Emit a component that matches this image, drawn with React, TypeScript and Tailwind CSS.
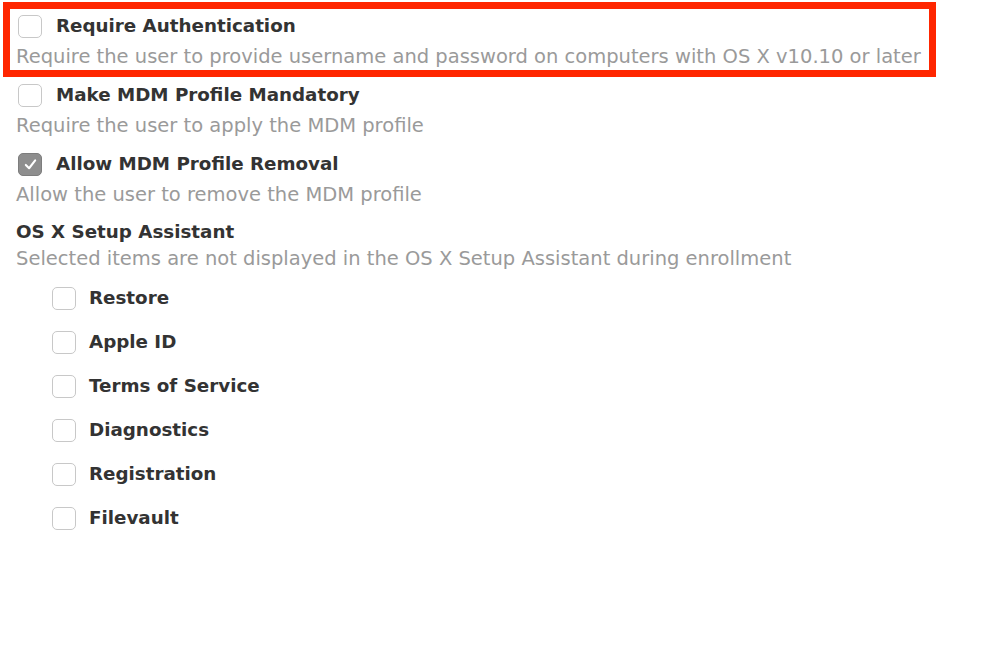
import React from "react";

function Box({ checked = false }: { checked?: boolean }) {
  if (checked) {
    return (
      <span className="flex h-[23px] w-[24px] shrink-0 items-center justify-center rounded-[5px] border border-[#7d7d7d] bg-[#8e8e8e]">
        <svg viewBox="0 0 16 16" className="h-[15px] w-[15px]" fill="none" stroke="white" strokeWidth="2.2" strokeLinecap="round" strokeLinejoin="round">
          <path d="M3 8.5 L6.5 12 L13 3.5" />
        </svg>
      </span>
    );
  }
  return <span className="block h-[23px] w-[24px] shrink-0 rounded-[5px] border border-[#c8c8c8] bg-white" />;
}

function Option({ title, desc, checked }: { title: string; desc: string; checked?: boolean }) {
  return (
    <div>
      <div className="flex h-[30px] items-center gap-[14px] pt-[2px] pl-[18px]">
        <Box checked={checked} />
        <span className="text-[18.3px] font-bold text-[#333]">{title}</span>
      </div>
      <div className="h-[30px] pt-[2px] pl-[16px] text-[19.5px] leading-[30px] whitespace-nowrap text-[#9a9a9a]">{desc}</div>
    </div>
  );
}

const items = ["Restore", "Apple ID", "Terms of Service", "Diagnostics", "Registration", "Filevault"];

export default function App() {
  return (
    <div className="h-[655px] w-[998px] bg-white" style={{ fontFamily: '"DejaVu Sans", Verdana, sans-serif' }}>
      <div className="ml-[3px] pt-[2px]">
        <div className="w-[933px] border-[7px] border-[#ff2600] pt-[1px]">
          <div className="-ml-[10px]">
            <Option title="Require Authentication" desc="Require the user to provide username and password on computers with OS X v10.10 or later" />
          </div>
        </div>
      </div>
      <div className="mt-[2px] flex flex-col gap-[9px]">
        <Option title="Make MDM Profile Mandatory" desc="Require the user to apply the MDM profile" />
        <Option title="Allow MDM Profile Removal" desc="Allow the user to remove the MDM profile" checked />
      </div>
      <div className="mt-[10px] pl-[16px]">
        <div className="text-[18.3px] font-bold leading-[28px] text-[#333]">OS X Setup Assistant</div>
        <div className="text-[19.5px] leading-[26px] text-[#9a9a9a]">Selected items are not displayed in the OS X Setup Assistant during enrollment</div>
      </div>
      <div className="mt-[13px] flex flex-col gap-[18px] pl-[52px]">
        {items.map((t) => (
          <div key={t} className="flex h-[26px] items-center gap-[13px]">
            <Box />
            <span className="text-[18.3px] font-bold leading-[26px] text-[#333]">{t}</span>
          </div>
        ))}
      </div>
    </div>
  );
}
